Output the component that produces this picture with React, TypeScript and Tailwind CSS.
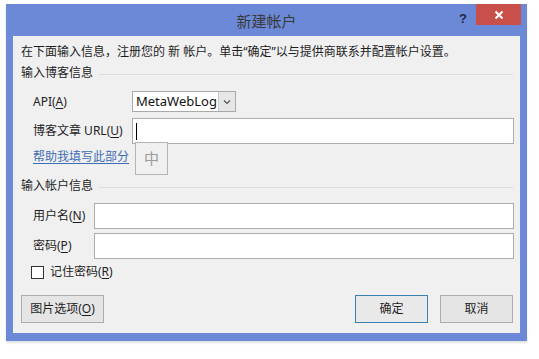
import React from "react";

const U = ({ c }: { c: string }) => <span className="underline underline-offset-2">{c}</span>;

function Field({ label, inputLeft }: { label: React.ReactNode; inputLeft: string }) {
  return (
    <div className="flex items-center h-[26px] pl-[20px] pr-[6px]">
      <div className={`${inputLeft} shrink-0 text-[12px] leading-[16px] text-[#1e1e1e]`}>{label}</div>
      <div className="flex-1 h-[26px] bg-white border border-[#abadb3]" />
    </div>
  );
}

function Section({ title }: { title: string }) {
  return (
    <div className="flex items-center pl-[8px] pr-[7px] h-[16px]">
      <span className="text-[12px] leading-[16px] text-[#1e1e1e] whitespace-nowrap">{title}</span>
      <div className="flex-1 h-px bg-[#dcdcdc] ml-[6px] mt-[2px]" />
    </div>
  );
}

export default function App() {
  return (
    <div className="w-[539px] h-[359px] bg-white overflow-hidden font-['Noto_Sans','Noto_Sans_CJK_SC',sans-serif] pt-[4px]">
      <div className="ml-[6px] w-[521px] h-[337px] bg-[#6b89d6] flex flex-col shadow-[0_2px_2px_rgba(0,0,0,0.12)]">
        <div className="h-[32px] relative flex items-center justify-center shrink-0">
          <span className="text-[15px] leading-[20px] text-[#3a3a3a] mt-[1px]">新建帐户</span>
          <span className="absolute left-[453px] top-[5px] text-[13px] font-bold text-[#222a44] font-['Liberation_Sans',sans-serif]">?</span>
          <div className="absolute left-[470px] top-0 w-[45px] h-[21px] bg-[#c9504a] flex items-center justify-center">
            <svg width="10" height="10" viewBox="0 0 10 10">
              <path d="M1.5 1.5 L8.5 8.5 M8.5 1.5 L1.5 8.5" stroke="white" strokeWidth="2" />
            </svg>
          </div>
        </div>
        <div className="mx-[7px] mb-[8px] flex-1 bg-[#f0f0f0] relative flex flex-col">
          <div className="pl-[8px] mt-[8px] text-[12px] leading-[16px] text-[#1e1e1e] whitespace-nowrap">
            在下面输入信息，注册您的 新 帐户。单击“确定”以与提供商联系并配置帐户设置。
          </div>
          <div className="mt-[5px]">
            <Section title="输入博客信息" />
          </div>
          <div className="mt-[10px] flex items-center h-[21px] pl-[20px]">
            <div className="w-[99px] text-[12px] leading-[16px] text-[#1e1e1e] font-['Noto_Sans',sans-serif]">
              API(<U c="A" />)
            </div>
            <div className="w-[104px] h-[21px] bg-white border border-[#a9a9a9] flex items-stretch">
              <div className="flex-1 text-[13px] leading-[19px] pl-[3px] text-[#111]">MetaWebLog</div>
              <div className="w-[17px] bg-[#e6e6e6] border-l border-[#c8c8c8] flex items-center justify-center">
                <svg width="8" height="6" viewBox="0 0 8 6">
                  <path d="M1 1.5 L4 4.5 L7 1.5" stroke="#555" strokeWidth="1.2" fill="none" />
                </svg>
              </div>
            </div>
          </div>
          <div className="mt-[6px] flex items-center h-[26px] pl-[20px] pr-[6px]">
            <div className="w-[99px] shrink-0 text-[12px] leading-[16px] text-[#1e1e1e]">
              博客文章 URL(<U c="U" />)
            </div>
            <div className="flex-1 h-[26px] bg-white border border-[#abadb3] flex items-center pl-[3px]">
              <div className="w-px h-[17px] bg-black" />
            </div>
          </div>
          <div className="mt-[5px] pl-[20px] h-[16px] text-[12px] leading-[16px] text-[#3e6db5] underline underline-offset-2">
            帮助我填写此部分
          </div>
          <div className="absolute left-[122px] top-[106px] w-[33px] h-[33px] border border-[#b4b4b4] bg-[#f0f0f0] flex items-center justify-center text-[15px] text-[#9a9a9a]">
            中
          </div>
          <div className="mt-[13px]">
            <Section title="输入帐户信息" />
          </div>
          <div className="mt-[9px]">
            <Field inputLeft="w-[61px]" label={<>用户名(<U c="N" />)</>} />
          </div>
          <div className="mt-[4px]">
            <Field inputLeft="w-[61px]" label={<>密码(<U c="P" />)</>} />
          </div>
          <div className="mt-[5px] flex items-center h-[16px] pl-[18px]">
            <div className="w-[13px] h-[13px] bg-white border border-[#333]" />
            <span className="ml-[6px] text-[12px] leading-[16px] text-[#1e1e1e]">
              记住密码(<U c="R" />)
            </span>
          </div>
          <div className="mt-[15px] flex items-center pl-[8px] pr-[7px]">
            <div className="w-[83px] h-[28px] bg-[#e5e5e5] border border-[#adadad] flex items-center justify-center text-[12px] text-[#1e1e1e]">
              图片选项(<U c="O" />)
            </div>
            <div className="flex-1" />
            <div className="w-[73px] h-[28px] bg-[#e9e9e9] border border-[#3c7fb1] flex items-center justify-center text-[12px] text-[#1e1e1e]">
              确定
            </div>
            <div className="ml-[12px] w-[73px] h-[28px] bg-[#e5e5e5] border border-[#adadad] flex items-center justify-center text-[12px] text-[#1e1e1e]">
              取消
            </div>
          </div>
        </div>
      </div>
    </div>
  );
}
